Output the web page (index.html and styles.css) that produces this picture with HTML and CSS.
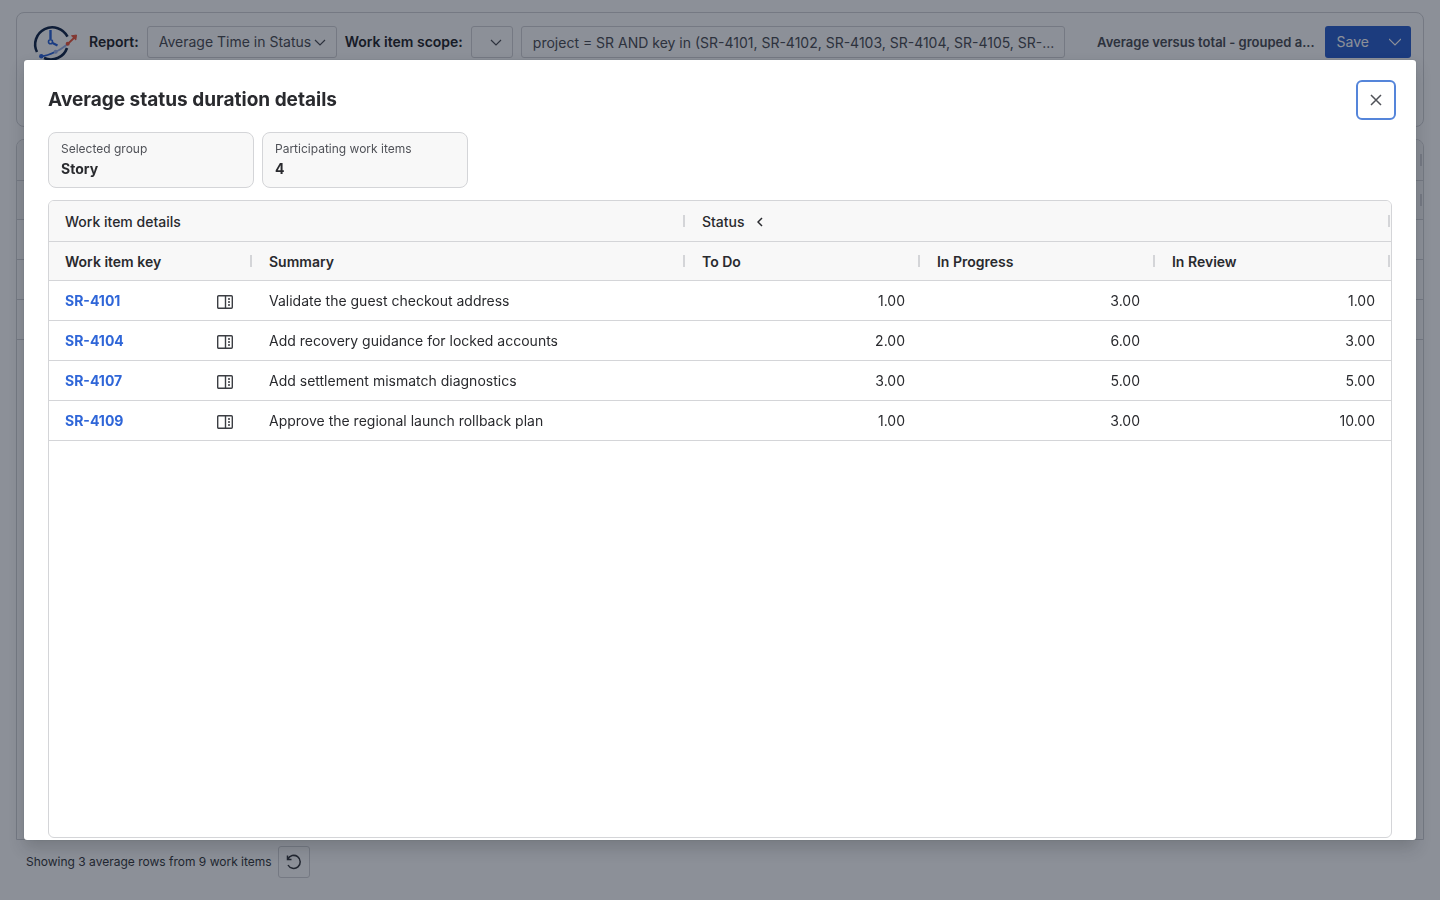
FILE: index.html
```
<!DOCTYPE html>
<html lang="en">
<head>
    <meta charset="UTF-8">
    <meta name="viewport" content="width=device-width, initial-scale=1.0">
    <title>Average status duration details</title>
    <link rel="stylesheet" href="styles.css">
</head>
<body>
    <div class="page">
        <header class="toolbar">
            <svg class="logo" viewBox="0 0 48 40" fill="none">
                <path d="M35.500 13.700A17 17 0 1 0 5 29" stroke="#172b4d" stroke-width="2.600"/>
                <path d="M35 25A17 17 0 0 1 12 35" stroke="#172b4d" stroke-width="2.600"/>
                <path d="M18.500 7V16" stroke="#2f66d8" stroke-width="2.400"/>
                <path d="M20.500 20L25.500 22.500" stroke="#2f66d8" stroke-width="2.200"/>
                <circle cx="18.500" cy="18.800" r="2" stroke="#2f66d8" stroke-width="1.600"/>
                <path d="M9.300 33.300C15 33 19 31 23.700 28.700" stroke="#2f66d8" stroke-width="1.800"/>
                <path d="M23.700 28.700C28 27 32 24 35.700 21" stroke="#9db4ea" stroke-width="1.800"/>
                <circle cx="9.300" cy="33.300" r="2.200" fill="#2f66d8"/>
                <circle cx="23.700" cy="28.700" r="2" fill="#9db4ea"/>
                <path d="M35.700 21L43 14" stroke="#ef5b40" stroke-width="1.800"/>
                <path d="M39.500 12.800L44.500 12L43.800 17Z" fill="#ef5b40" stroke="#ef5b40"/>
                <circle cx="35.700" cy="20.800" r="2" fill="#ef5b40"/>
            </svg>
            <label class="toolbar-label" for="report">Report:</label>
            <div class="select-box report-box">
                <select id="report">
                    <option>Average Time in Status</option>
                </select>
                <svg class="chevron" viewBox="0 0 12 12"><path d="M1 4L6 9L11 4"/></svg>
            </div>
            <label class="toolbar-label" for="scope">Work item scope:</label>
            <div class="select-box scope-box">
                <select id="scope">
                    <option></option>
                </select>
                <svg class="chevron" viewBox="0 0 12 12"><path d="M1 4L6 9L11 4"/></svg>
            </div>
            <input class="jql" type="text" aria-label="JQL query" value="project = SR AND key in (SR-4101, SR-4102, SR-4103, SR-4104, SR-4105, SR-...">
            <span class="report-name">Average versus total - grouped a...</span>
            <div class="save-group">
                <button class="save">Save</button>
                <button class="save-more" aria-label="More save options">
                    <svg class="chevron" viewBox="0 0 12 12"><path d="M0 3L6 9L12 3"/></svg>
                </button>
            </div>
        </header>
        <div class="report-grid">
            <div class="grid-row grid-head grid-group"></div>
            <div class="grid-row grid-head"></div>
            <div class="grid-row"></div>
            <div class="grid-row"></div>
            <div class="grid-row"></div>
        </div>
        <footer class="footer">
            <span>Showing 3 average rows from 9 work items</span>
            <button class="refresh" aria-label="Refresh">
                <svg viewBox="0 0 16 16"><path d="M1.500 1.500V5.500H5.500M1.800 5.200A6.500 6.500 0 1 1 2 11"/></svg>
            </button>
        </footer>
    </div>

    <div class="blanket">
        <section class="modal" role="dialog" aria-modal="true" aria-labelledby="modal-title">
            <div class="modal-header">
                <h1 id="modal-title">Average status duration details</h1>
                <button class="close" aria-label="Close">
                    <svg viewBox="0 0 12 12"><path d="M1 1L11 11M11 1L1 11"/></svg>
                </button>
            </div>
            <dl class="cards">
                <div class="card">
                    <dt>Selected group</dt>
                    <dd>Story</dd>
                </div>
                <div class="card">
                    <dt>Participating work items</dt>
                    <dd>4</dd>
                </div>
            </dl>
            <div class="details">
                <table>
                    <colgroup>
                        <col class="col-key">
                        <col>
                        <col class="col-status">
                        <col class="col-status">
                        <col class="col-status">
                    </colgroup>
                    <thead>
                        <tr class="group-row">
                            <th colspan="2">Work item details</th>
                            <th colspan="3">Status
                                <button class="collapse" aria-label="Collapse status columns">
                                    <svg viewBox="0 0 6 10"><path d="M5 1L1 5L5 9"/></svg>
                                </button>
                            </th>
                        </tr>
                        <tr class="column-row">
                            <th>Work item key</th>
                            <th>Summary</th>
                            <th>To Do</th>
                            <th>In Progress</th>
                            <th>In Review</th>
                        </tr>
                    </thead>
                    <tbody>
                        <tr>
                            <td><div class="key"><a href="#">SR-4101</a><button aria-label="Open SR-4101 panel"><svg viewBox="0 0 16 14"><use href="#panel"/></svg></button></div></td>
                            <td>Validate the guest checkout address</td>
                            <td class="num">1.00</td>
                            <td class="num">3.00</td>
                            <td class="num">1.00</td>
                        </tr>
                        <tr>
                            <td><div class="key"><a href="#">SR-4104</a><button aria-label="Open SR-4104 panel"><svg viewBox="0 0 16 14"><use href="#panel"/></svg></button></div></td>
                            <td>Add recovery guidance for locked accounts</td>
                            <td class="num">2.00</td>
                            <td class="num">6.00</td>
                            <td class="num">3.00</td>
                        </tr>
                        <tr>
                            <td><div class="key"><a href="#">SR-4107</a><button aria-label="Open SR-4107 panel"><svg viewBox="0 0 16 14"><use href="#panel"/></svg></button></div></td>
                            <td>Add settlement mismatch diagnostics</td>
                            <td class="num">3.00</td>
                            <td class="num">5.00</td>
                            <td class="num">5.00</td>
                        </tr>
                        <tr>
                            <td><div class="key"><a href="#">SR-4109</a><button aria-label="Open SR-4109 panel"><svg viewBox="0 0 16 14"><use href="#panel"/></svg></button></div></td>
                            <td>Approve the regional launch rollback plan</td>
                            <td class="num">1.00</td>
                            <td class="num">3.00</td>
                            <td class="num">10.00</td>
                        </tr>
                    </tbody>
                </table>
            </div>
        </section>
    </div>

    <svg class="sprite">
        <symbol id="panel" viewBox="0 0 16 14">
            <rect x=".7" y=".7" width="14.600" height="12.600" rx="1" fill="none" stroke="#3b3d42" stroke-width="1.400"/>
            <path d="M8.500 1V13" stroke="#3b3d42" stroke-width="1.400"/>
            <path d="M11 4H13M11 7H13M11 10H13" stroke="#3b3d42" stroke-width="1.600"/>
        </symbol>
    </svg>
</body>
</html>
```
FILE: styles.css
```
* {
    margin: 0;
    padding: 0;
    box-sizing: border-box;
}
body {
    font-family: Inter, "Liberation Sans", sans-serif;
    font-size: 14px;
    line-height: 20px;
    color: #292a2e;
    background: #fff;
}
button, input, select {
    font: inherit;
    color: inherit;
}
button {
    border: none;
    background: none;
    cursor: pointer;
}
svg {
    display: block;
}

/* page behind the dialog */
.page {
    min-height: 100vh;
    padding: 12px 16px 16px;
    display: flex;
    flex-direction: column;
}
.toolbar {
    display: flex;
    align-items: flex-start;
    gap: 8px;
    min-height: 115px;
    padding: 13px 12px 12px 16px;
    border: 1px solid #d4d5d8;
    border-radius: 8px;
}
.logo {
    flex: none;
    width: 48px;
    height: 40px;
    margin: -3px 1px 0 -1px;
}
.toolbar-label {
    font-weight: 600;
    line-height: 32px;
    white-space: nowrap;
}
.select-box {
    display: grid;
    align-items: center;
    height: 32px;
    border: 1px solid #d4d5d8;
    border-radius: 3px;
}
.select-box select {
    grid-area: 1 / 1;
    width: 100%;
    height: 30px;
    padding: 0 11px;
    appearance: none;
    border: none;
    background: none;
    color: #505258;
}
.chevron {
    width: 12px;
    height: 12px;
    fill: none;
    stroke: #505258;
    stroke-width: 1.2;
}
.select-box .chevron {
    grid-area: 1 / 1;
    justify-self: end;
    margin-right: 10px;
    pointer-events: none;
}
.report-box {
    width: 190px;
}
.scope-box {
    width: 42px;
}
.jql {
    flex: 1;
    min-width: 0;
    height: 32px;
    padding: 0 2px 0 11px;
    border: 1px solid #d4d5d8;
    border-radius: 3px;
    background: none;
    color: #505258;
    text-overflow: ellipsis;
}
.report-name {
    padding-left: 24px;
    font-size: 13px;
    font-weight: 600;
    line-height: 32px;
    white-space: nowrap;
    color: #505258;
}
.save-group {
    display: flex;
    height: 32px;
    margin-left: 2px;
    border-radius: 3px;
    background: #3064d0;
    color: #fff;
}
.save {
    padding: 0 10px 0 12px;
}
.save-more {
    padding: 0 10px;
}
.save-more .chevron {
    stroke: #fff;
}
.report-grid {
    flex: 1;
    margin-top: 12px;
    border: 1px solid #d4d5d8;
    border-radius: 8px 8px 0 0;
    overflow: hidden;
}
.grid-row {
    height: 40px;
    border-bottom: 1px solid #d4d5d8;
}
.grid-head {
    display: flex;
    align-items: center;
    justify-content: flex-end;
    height: 39px;
    background: #f8f8f8;
}
.grid-group {
    height: 41px;
}
.grid-head::after {
    content: "";
    width: 2px;
    height: 12px;
    margin-right: 1px;
    background: #d4d5d8;
}
.footer {
    display: flex;
    align-items: center;
    gap: 6px;
    padding: 6px 10px;
    font-size: 12px;
    color: #3b3d42;
}
.refresh {
    display: grid;
    place-items: center;
    width: 32px;
    height: 32px;
    border: 1px solid #d4d5d8;
    border-radius: 3px;
}
.refresh svg {
    width: 16px;
    height: 16px;
    fill: none;
    stroke: #3b3d42;
    stroke-width: 1.5;
}

/* dialog */
.blanket {
    position: fixed;
    inset: 0;
    display: flex;
    padding: 60px 24px;
    background: rgba(5, 12, 31, 0.46);
}
.modal {
    flex: 1;
    display: flex;
    flex-direction: column;
    padding: 20px 24px 2px;
    border-radius: 3px;
    background: #fff;
    box-shadow: 0 8px 16px rgba(30, 31, 33, 0.2), 0 0 1px rgba(30, 31, 33, 0.31);
}
.modal-header {
    display: flex;
    align-items: center;
    justify-content: space-between;
    margin-right: -4px;
}
h1 {
    font-size: 19px;
    font-weight: 700;
    line-height: 24px;
}
.close {
    display: grid;
    place-items: center;
    width: 40px;
    height: 40px;
    border: 2px solid #5585da;
    border-radius: 6px;
}
.close svg {
    width: 12px;
    height: 12px;
    fill: none;
    stroke: #505258;
    stroke-width: 1.5;
}
.cards {
    display: flex;
    gap: 8px;
    margin: 12px 0;
}
.card {
    width: 206px;
    padding: 6px 12px 8px;
    border: 1px solid #d4d5d8;
    border-radius: 8px;
    background: #f8f8f8;
}
.card dt {
    font-size: 12px;
    color: #505258;
}
.card dd {
    font-weight: 700;
}
.details {
    flex: 1;
    border: 1px solid #d4d5d8;
    border-radius: 6px;
    overflow: hidden;
}
table {
    width: 100%;
    table-layout: fixed;
    border-collapse: separate;
    border-spacing: 0;
}
.col-key {
    width: 204px;
}
.col-status {
    width: 235px;
}
th, td {
    height: 40px;
    padding: 0 16px;
    border-bottom: 1px solid #d4d5d8;
    text-align: left;
    vertical-align: middle;
}
th {
    position: relative;
    height: 39px;
    padding-top: 2px;
    background: #f8f8f8;
    font-weight: 600;
}
.group-row th {
    height: 41px;
    font-weight: 500;
}
/* column resize handle */
th::after {
    content: "";
    position: absolute;
    top: 50%;
    right: 1px;
    width: 2px;
    height: 12px;
    margin-top: -6px;
    background: #d4d5d8;
}
.collapse {
    margin-left: 9px;
}
.collapse svg {
    width: 6px;
    height: 10px;
    fill: none;
    stroke: #292a2e;
    stroke-width: 1.5;
}
.key {
    display: flex;
    align-items: center;
    justify-content: space-between;
}
.key a {
    font-weight: 700;
    color: #2f66d8;
    text-decoration: none;
}
.key button {
    padding-top: 2px;
    margin-right: 4px;
}
.key svg {
    width: 16px;
    height: 14px;
}
.num {
    text-align: right;
}
.sprite {
    position: absolute;
    width: 0;
    height: 0;
}
```
